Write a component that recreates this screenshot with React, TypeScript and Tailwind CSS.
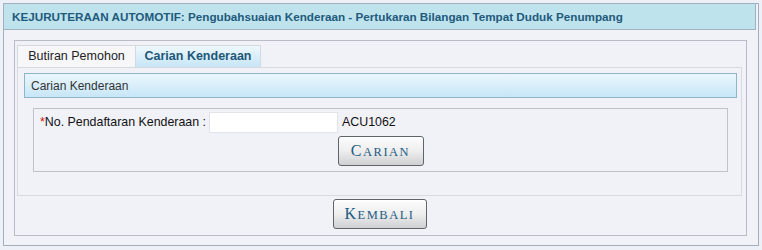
import React from 'react'

const sans = "font-['Liberation_Sans',Arial,sans-serif]"

function OldButton({ label, width }: { label: string; width: string }) {
  return (
    <button
      className={`${width} h-[30px] rounded-[3px] border border-[#5f6468] bg-gradient-to-b from-[#fdfdfd] via-[#eeeeee] to-[#cfd0d2] font-['Liberation_Serif',serif] tracking-[1.5px] text-[#1d5c84] shadow-[inset_0_1px_0_#ffffff] leading-none`}
    >
      <span className="text-[16px]">{label[0]}</span>
      <span className="text-[12.5px]">{label.slice(1).toUpperCase()}</span>
    </button>
  )
}

export default function App() {
  return (
    <div className={`w-[762px] h-[250px] bg-[#eef0f7] pt-[3px] pl-[3px] ${sans}`}>
      <div className="w-[756px] h-[243px] border border-[#a5afbd] bg-[#f1f2f8]">
        {/* Tajuk */}
        <div className="w-[752px] h-[26px] border-b border-r border-[#9db3bf] bg-[#bee3ed] flex items-center pl-[8px]">
          <span className="text-[11.7px] font-bold text-[#1f5a7c] leading-none">
            KEJURUTERAAN AUTOMOTIF: Pengubahsuaian Kenderaan - Pertukaran Bilangan Tempat Duduk Penumpang
          </span>
        </div>

        {/* Fieldset */}
        <div className="ml-[10px] mt-[10px] w-[733px] h-[196px] border border-[#b9bcc6] pl-[2px] pt-[4px] pr-[4px] flex flex-col">
          {/* Tabs */}
          <div className="flex h-[22px]">
            <div className="w-[119px] h-[22px] border border-b-0 border-[#d6d8e0] bg-[#f7f7fa] flex items-center justify-center text-[12.5px] text-[#222]">
              Butiran Pemohon
            </div>
            <div className="w-[125px] h-[22px] border-t border-r border-[#d6d8e0] bg-gradient-to-b from-[#eef8fd] to-[#c6e5f6] flex items-center justify-center text-[12.5px] font-bold text-[#1d5878]">
              Carian Kenderaan
            </div>
          </div>

          {/* Panel */}
          <div className="w-[725px] border border-[#d8dae2] pl-[6px] pr-[4px] pt-[5px] pb-[23px]">
            <div className="h-[25px] border border-[#8fb5c9] bg-gradient-to-b from-[#eaf6fc] to-[#c7e6f8] flex items-center pl-[6px] text-[12px] text-[#333]">
              Carian Kenderaan
            </div>

            <div className="mx-[9px] mt-[10px] h-[64px] border border-[#bfc2cb] pl-[6px] pt-[3px]">
              <div className="flex items-center h-[21px] text-[12.4px] text-[#111]">
                <span>
                  <span className="text-[#d01818]">*</span>No. Pendaftaran Kenderaan :
                </span>
                <input
                  type="text"
                  className="ml-[3px] w-[129px] h-[21px] bg-white border border-[#e3e4ea] outline-none"
                />
                <span className="ml-[4px]">ACU1062</span>
              </div>
              <div className="flex justify-center mt-[3px] pr-[6px]">
                <OldButton label="Carian" width="w-[86px]" />
              </div>
            </div>
          </div>

          <div className="flex justify-center mt-[3px]">
            <OldButton label="Kembali" width="w-[94px]" />
          </div>
        </div>
      </div>
    </div>
  )
}
